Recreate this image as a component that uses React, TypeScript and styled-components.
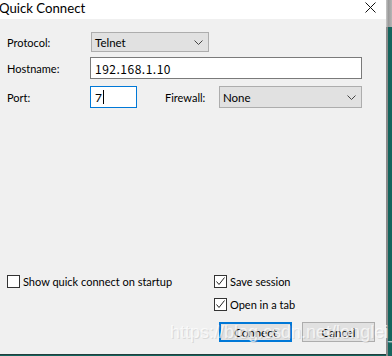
import React from "react";
import styled, { createGlobalStyle } from "styled-components";

const Global = createGlobalStyle`
  html, body { margin: 0; padding: 0; background: #14645d; }
  body { width: 392px; height: 356px; overflow: hidden; font-family: Lato, "Noto Sans", sans-serif; }
`;

const Page = styled.div`
  display: flex;
  width: 392px;
  height: 356px;
  background: #14645d;
`;

const Dialog = styled.div`
  position: relative;
  display: flex;
  flex-direction: column;
  width: 386px;
  height: 355px;
  background: #f0f0f0;
  border-bottom: 1px solid #1f3f3d;
  box-sizing: border-box;
`;

const Edge = styled.div`
  display: flex;
  flex-direction: column;
  width: 6px;
  height: 356px;
`;

const EdgeTop = styled.div`
  height: 27px;
  background: linear-gradient(to right, #c8c8c8, #9a9a9a 40%, #b5b5b5);
`;

const EdgeRest = styled.div`
  flex: 1;
  background: linear-gradient(to right, #8a8a8a 0, #8a8a8a 2px, #14645d 2px);
`;

const TitleBar = styled.div`
  display: flex;
  align-items: center;
  justify-content: space-between;
  height: 19px;
  background: #ffffff;
  padding: 0 10px 0 0;
  margin-left: -1px;
`;

const Title = styled.span`
  font-family: Lato, "Noto Sans", sans-serif;
  font-size: 13.2px;
  color: #000;
  line-height: 19px;
  margin-top: -3px;
`;

const Close = styled.svg`
  width: 11px;
  height: 11px;
  margin-top: -4px;
`;

const Body = styled.div`
  flex: 1;
  display: flex;
  flex-direction: column;
  padding: 13px 0 0 7px;
`;

const Row = styled.div<{ $mt?: number; $h: number }>`
  display: flex;
  align-items: center;
  height: ${(p) => p.$h}px;
  margin-top: ${(p) => p.$mt ?? 0}px;
`;

const Label = styled.span<{ $w: number; $ml?: number }>`
  width: ${(p) => p.$w}px;
  margin-left: ${(p) => p.$ml ?? 0}px;
  font-size: 11px;
  color: #000;
  flex: none;
`;

const Select = styled.div<{ $w: number }>`
  display: flex;
  align-items: center;
  justify-content: space-between;
  box-sizing: border-box;
  width: ${(p) => p.$w}px;
  height: 100%;
  border: 1px solid #adadad;
  background: #e1e1e1;
  padding: 0 5px 0 3px;
  font-size: 11.5px;
  color: #000;
`;

const Input = styled.div<{ $w: number; $focus?: boolean; $cjk?: boolean }>`
  display: flex;
  align-items: center;
  box-sizing: border-box;
  width: ${(p) => p.$w}px;
  height: 100%;
  border: 1px solid ${(p) => (p.$focus ? "#0078d7" : "#7a7a7a")};
  background: #fff;
  padding-left: 4px;
  font-family: ${(p) => (p.$cjk ? '"Noto Sans CJK SC", sans-serif' : "Lato, sans-serif")};
  font-size: 12px;
  letter-spacing: ${(p) => (p.$cjk ? "0.5px" : "0")};
  color: #000;
`;

const Caret = styled.span`
  display: inline-block;
  width: 1px;
  height: 14px;
  background: #000;
  margin-left: 1px;
`;

const Spacer = styled.div`
  flex: 1;
`;

const Bottom = styled.div`
  display: flex;
  padding-bottom: 12px;
`;

const LeftCol = styled.div`
  width: 207px;
`;

const RightCol = styled.div`
  display: flex;
  flex-direction: column;
  gap: 10px;
`;

const Check = styled.label`
  display: flex;
  align-items: center;
  height: 13px;
  gap: 3px;
  font-size: 11px;
  color: #000;
`;

const Box = styled.span`
  display: flex;
  align-items: center;
  justify-content: center;
  box-sizing: border-box;
  width: 13px;
  height: 13px;
  border: 1px solid #333;
  background: #fff;
`;

const Buttons = styled.div`
  display: flex;
  gap: 10px;
  margin-left: 5px;
  margin-top: 1px;
`;

const Button = styled.div<{ $primary?: boolean }>`
  display: flex;
  align-items: center;
  justify-content: center;
  box-sizing: border-box;
  width: 73px;
  height: 20px;
  background: #e1e1e1;
  border: ${(p) => (p.$primary ? "2px solid #0078d7" : "1px solid #adadad")};
  font-size: 11.5px;
  color: #000;
`;

const Watermark = styled.div`
  position: absolute;
  left: 170px;
  top: 322px;
  font-family: "Liberation Sans", Arial, sans-serif;
  font-size: 18px;
  color: rgba(255, 255, 255, 0.7);
  text-shadow: 1px 1px 0 rgba(160, 160, 160, 0.3);
  pointer-events: none;
  white-space: nowrap;
`;

const Chevron = () => (
  <svg width="9" height="5" viewBox="0 0 9 5">
    <polyline points="0.5,0.5 4.5,4.5 8.5,0.5" fill="none" stroke="#444" strokeWidth="1" />
  </svg>
);

const Tick = () => (
  <svg width="11" height="11" viewBox="0 0 11 11">
    <polyline points="1.5,5.5 4,8.5 9.5,1.5" fill="none" stroke="#222" strokeWidth="1" />
  </svg>
);

export default function App() {
  return (
    <>
      <Global />
      <Page>
        <Dialog>
          <TitleBar>
            <Title>Quick Connect</Title>
            <Close viewBox="0 0 11 11">
              <line x1="0.5" y1="0.5" x2="10.5" y2="10.5" stroke="#111" strokeWidth="1" />
              <line x1="10.5" y1="0.5" x2="0.5" y2="10.5" stroke="#111" strokeWidth="1" />
            </Close>
          </TitleBar>
          <Body>
            <Row $h={20}>
              <Label $w={84}>Protocol:</Label>
              <Select $w={118}>
                <span>Telnet</span>
                <Chevron />
              </Select>
            </Row>
            <Row $h={22} $mt={5}>
              <Label $w={83}>Hostname:</Label>
              <Input $w={272} $cjk>192.168.1.10</Input>
            </Row>
            <Row $h={22} $mt={7}>
              <Label $w={83}>Port:</Label>
              <Input $w={47} $focus>
                7<Caret />
              </Input>
              <Label $w={54} $ml={28}>Firewall:</Label>
              <Select $w={143}>
                <span>None</span>
                <Chevron />
              </Select>
            </Row>
            <Spacer />
            <Bottom>
              <LeftCol>
                <Check>
                  <Box />
                  Show quick connect on startup
                </Check>
              </LeftCol>
              <RightCol>
                <Check>
                  <Box>
                    <Tick />
                  </Box>
                  Save session
                </Check>
                <Check>
                  <Box>
                    <Tick />
                  </Box>
                  Open in a tab
                </Check>
                <Buttons>
                  <Button $primary>Connect</Button>
                  <Button>Cancel</Button>
                </Buttons>
              </RightCol>
            </Bottom>
          </Body>
          <Watermark>https://blog.csdn.net/longlei_3</Watermark>
        </Dialog>
        <Edge>
          <EdgeTop />
          <EdgeRest />
        </Edge>
      </Page>
    </>
  );
}
